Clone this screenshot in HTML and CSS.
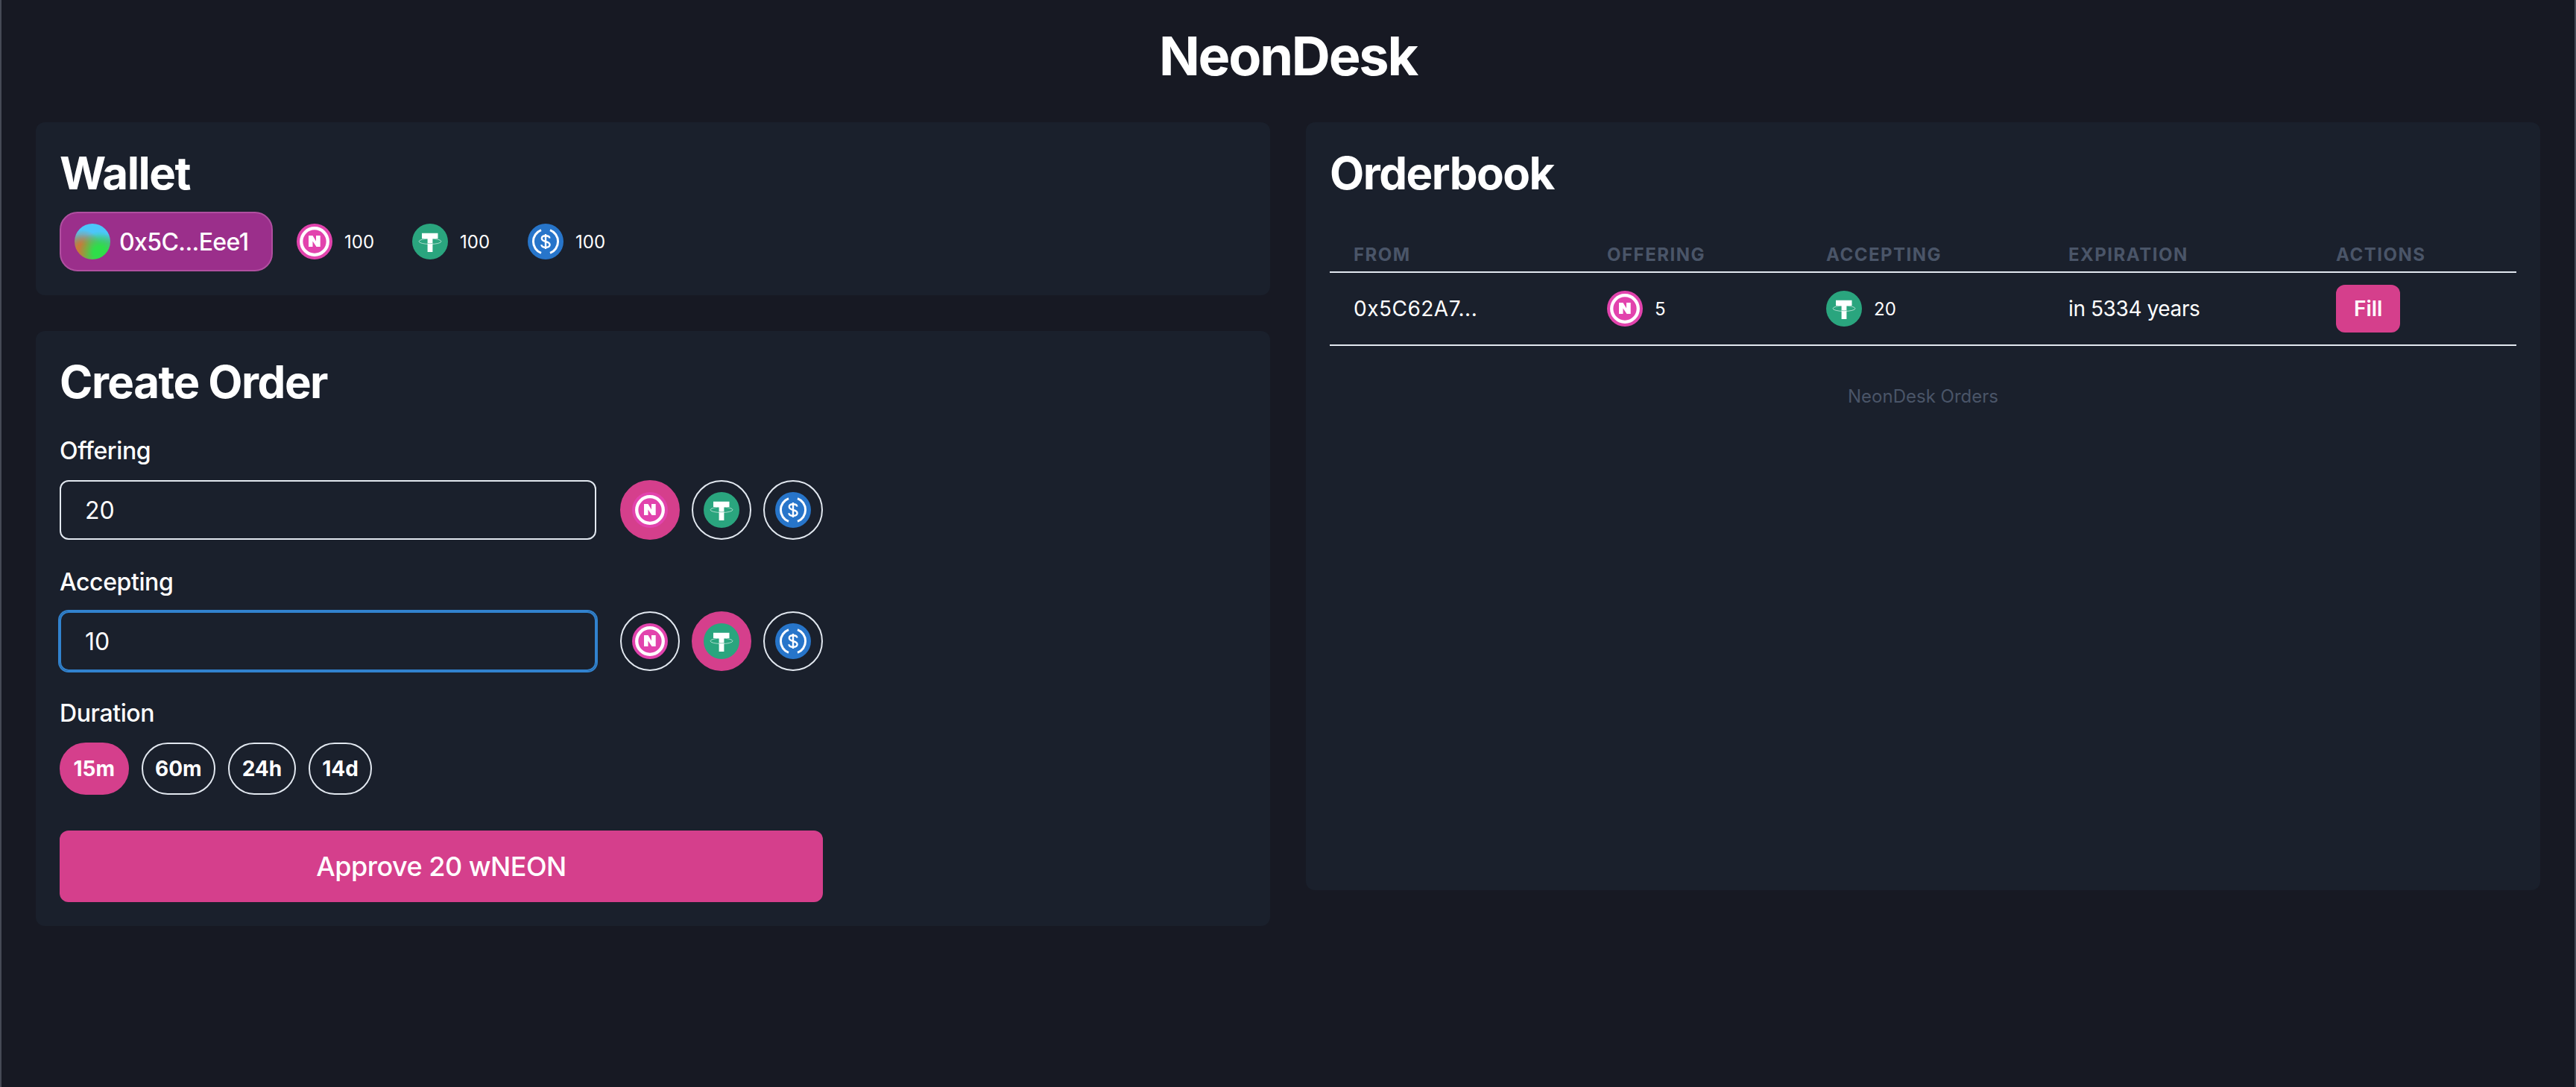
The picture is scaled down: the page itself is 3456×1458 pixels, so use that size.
FILE: index.html
```html
<!DOCTYPE html>
<html lang="en">
<head>
<meta charset="utf-8">
<title>NeonDesk</title>
<link rel="stylesheet" href="styles.css">
</head>
<body>
<svg class="defs" aria-hidden="true">
  <symbol id="neon" viewBox="0 0 48 48">
    <circle cx="24" cy="24" r="24" fill="#e243ad"/>
    <circle cx="24" cy="24" r="17.8" fill="none" stroke="#fff" stroke-width="4.3"/>
    <path d="M16 16H21.5L26 23.5V16H31.7V31H26.5L21.5 23.5V31H16Z" fill="#fff"/>
  </symbol>
  <symbol id="usdt" viewBox="0 0 48 48">
    <circle cx="24" cy="24" r="24" fill="#2aa57e"/>
    <path d="M13 12.7H34.5V20H27.4V38H20.6V20H13Z" fill="#fff"/>
    <path d="M20.6 26.6Q24 27.4 27.4 26.6" fill="none" stroke="#2aa57e" stroke-width="0.7"/>
    <ellipse cx="24" cy="23.8" rx="15" ry="3.7" fill="none" stroke="#fff" stroke-width="0.7" stroke-opacity="0.85"/>
  </symbol>
  <symbol id="usdc" viewBox="0 0 48 48">
    <circle cx="24" cy="24" r="24" fill="#2775ca"/>
    <path d="M18 8.6A16.5 16.5 0 0 0 18 39.4M30 8.6A16.5 16.5 0 0 1 30 39.4" fill="none" stroke="#fff" stroke-width="3"/>
    <path d="M29.4 19.5C29.2 17 27 16.2 24 16.2S18.8 17.4 18.8 19.8C18.8 25.4 29.6 22.6 29.6 28.2C29.6 30.8 27 31.8 24 31.8S18.5 30.6 18.4 28.2M24 14V34" fill="none" stroke="#fff" stroke-width="2.4"/>
  </symbol>
</svg>

<header class="top">
  <h1 class="brand">NeonDesk</h1>
</header>

<main class="layout">
  <div class="column">
    <section class="card">
      <h2 class="card-title card-title-tight">Wallet</h2>
      <div class="wallet-row">
        <button class="account" type="button"><span class="avatar"></span>0x5C...Eee1</button>
        <div class="balances">
          <div class="token-value"><svg class="token"><use href="#neon"/></svg><span>100</span></div>
          <div class="token-value"><svg class="token"><use href="#usdt"/></svg><span>100</span></div>
          <div class="token-value"><svg class="token"><use href="#usdc"/></svg><span>100</span></div>
        </div>
      </div>
    </section>

    <section class="card">
      <h2 class="card-title">Create Order</h2>
      <form class="order-form">
        <div class="field">
          <label class="field-label">Offering</label>
          <div class="field-row">
            <input class="amount" type="text" value="20">
            <div class="token-picks">
              <button class="pick pick-on" type="button"><svg class="token"><use href="#neon"/></svg></button>
              <button class="pick" type="button"><svg class="token"><use href="#usdt"/></svg></button>
              <button class="pick" type="button"><svg class="token"><use href="#usdc"/></svg></button>
            </div>
          </div>
        </div>
        <div class="field">
          <label class="field-label">Accepting</label>
          <div class="field-row">
            <input class="amount amount-focus" type="text" value="10">
            <div class="token-picks">
              <button class="pick" type="button"><svg class="token"><use href="#neon"/></svg></button>
              <button class="pick pick-on" type="button"><svg class="token"><use href="#usdt"/></svg></button>
              <button class="pick" type="button"><svg class="token"><use href="#usdc"/></svg></button>
            </div>
          </div>
        </div>
        <div class="field field-last">
          <label class="field-label">Duration</label>
          <div class="durations">
            <button class="duration duration-on" type="button">15m</button>
            <button class="duration" type="button">60m</button>
            <button class="duration" type="button">24h</button>
            <button class="duration" type="button">14d</button>
          </div>
        </div>
        <button class="submit" type="button">Approve 20 wNEON</button>
      </form>
    </section>
  </div>

  <section class="card card-book">
    <h2 class="card-title">Orderbook</h2>
    <table class="book">
      <caption class="book-caption">NeonDesk Orders</caption>
      <colgroup>
        <col class="col-from"><col class="col-offer"><col class="col-accept"><col class="col-exp"><col class="col-act">
      </colgroup>
      <thead>
        <tr><th>From</th><th>Offering</th><th>Accepting</th><th>Expiration</th><th>Actions</th></tr>
      </thead>
      <tbody>
        <tr>
          <td class="cell-address">0x5C62A7...</td>
          <td><div class="token-value"><svg class="token"><use href="#neon"/></svg><span>5</span></div></td>
          <td><div class="token-value"><svg class="token"><use href="#usdt"/></svg><span>20</span></div></td>
          <td class="cell-expiry">in 5334 years</td>
          <td><button class="fill" type="button">Fill</button></td>
        </tr>
      </tbody>
    </table>
  </section>
</main>
</body>
</html>
```

FILE: styles.css
```css
* { box-sizing: border-box; }
html, body { margin: 0; min-height: 100%; }
body {
  min-height: 1458px;
  background: #171923;
  color: #fff;
  font-family: Inter, "Liberation Sans", sans-serif;
  box-shadow: inset 2px 0 0 #454955, inset -2px 0 0 #454955;
}
button, input { font-family: inherit; color: inherit; }
.defs { display: none; }

.top { height: 164px; padding-top: 32px; text-align: center; }
.brand { margin: 0; font-size: 72px; line-height: 86px; font-weight: 700; letter-spacing: -2.2px; }

.layout {
  display: grid;
  grid-template-columns: 1656px 1656px;
  gap: 48px;
  padding: 0 48px;
  align-items: start;
}
.column { display: flex; flex-direction: column; gap: 48px; }
.card { background: #1a202c; border-radius: 12px; padding: 32px; }
.card-book { min-height: 1030px; }
.card-title { margin: 0 0 32px; font-size: 60px; line-height: 72px; font-weight: 700; letter-spacing: -1.5px; }
.card-title-tight { margin-bottom: 16px; }

.wallet-row { display: flex; align-items: center; gap: 32px; }
.account {
  display: flex;
  align-items: center;
  gap: 12px;
  width: 286px;
  height: 80px;
  padding: 0 18px;
  border: 2px solid #b04fa0;
  border-radius: 24px;
  background: #9b2f8b;
  font-size: 32px;
  font-weight: 500;
  letter-spacing: -0.6px;
}
.avatar {
  flex: none;
  width: 48px;
  height: 48px;
  border-radius: 50%;
  background:
    radial-gradient(circle at 70% 80%, #2ede4a 0 16%, rgba(46, 222, 74, 0) 55%),
    radial-gradient(circle at 22% 72%, #c87a3a 0 14%, rgba(200, 122, 58, 0) 52%),
    linear-gradient(180deg, #4cc6fb 0 30%, #5aa8a8 55%, #6fa55f 100%);
}
.balances { display: flex; gap: 51px; }
.token-value { display: flex; align-items: center; gap: 16px; font-size: 24px; }
.token { display: block; flex: none; width: 48px; height: 48px; }

.order-form { width: 1024px; }
.field { margin-bottom: 32px; }
.field-last { margin-bottom: 0; }
.field-label {
  display: block;
  margin-bottom: 14px;
  font-size: 32px;
  line-height: 50px;
  font-weight: 500;
  letter-spacing: -0.4px;
}
.field-row { display: flex; align-items: center; gap: 32px; }
.amount {
  width: 720px;
  height: 80px;
  padding: 0 32px;
  border: 2px solid #e2e8f0;
  border-radius: 12px;
  background: transparent;
  outline: none;
  font-size: 32px;
}
.amount-focus { border-color: #3182ce; box-shadow: 0 0 0 2px #3182ce; }
.token-picks { display: flex; gap: 16px; }
.pick {
  display: flex;
  align-items: center;
  justify-content: center;
  width: 80px;
  height: 80px;
  padding: 0;
  border: 2px solid #e2e8f0;
  border-radius: 50%;
  background: transparent;
}
.pick-on { background: #d53f8c; border-color: #d53f8c; }

.durations { display: flex; gap: 17px; margin-bottom: 48px; }
.duration {
  height: 70px;
  padding: 0 16.5px;
  border: 2px solid #e2e8f0;
  border-radius: 35px;
  background: transparent;
  font-size: 28px;
  font-weight: 700;
}
.duration-on { background: #d53f8c; border-color: #d53f8c; }
.submit {
  display: block;
  width: 100%;
  height: 96px;
  border: 0;
  border-radius: 12px;
  background: #d53f8c;
  font-size: 36px;
  font-weight: 500;
  letter-spacing: -0.5px;
}

.book { width: 1592px; margin-top: 56px; border-collapse: collapse; table-layout: fixed; }
.col-from { width: 340px; }
.col-offer { width: 294px; }
.col-accept { width: 325px; }
.col-exp { width: 359px; }
.col-act { width: 274px; }
.book th {
  padding: 2px 32px 6px;
  border-bottom: 2px solid #e2e8f0;
  text-align: left;
  color: #4a5568;
  font-size: 24px;
  line-height: 32px;
  font-weight: 700;
  letter-spacing: 1.5px;
  text-transform: uppercase;
}
.book td {
  height: 98px;
  padding: 0 32px;
  border-bottom: 2px solid #e2e8f0;
  font-size: 28px;
}
.book .cell-address { letter-spacing: 0.5px; }
.book .cell-expiry { letter-spacing: -0.4px; }
.book-caption {
  caption-side: bottom;
  padding: 52px 0 0;
  color: #4a5568;
  font-size: 24px;
  line-height: 32px;
  text-align: center;
}
.fill {
  display: block;
  height: 64px;
  padding: 0 24px;
  border: 0;
  border-radius: 12px;
  background: #d53f8c;
  font-size: 28px;
  font-weight: 600;
}
```
